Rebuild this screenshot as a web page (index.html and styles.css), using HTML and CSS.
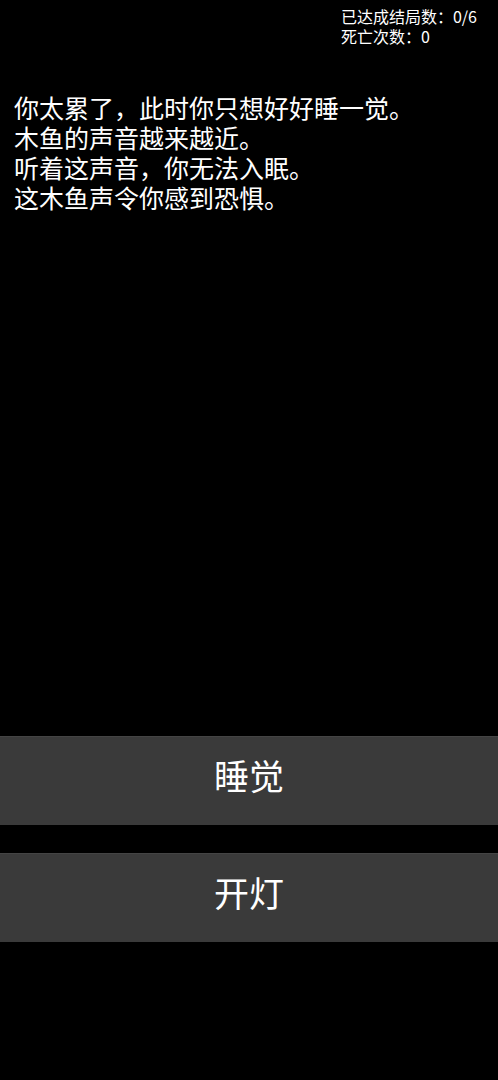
FILE: index.html
```html
<!DOCTYPE html>
<html lang="zh">
<head>
<meta charset="utf-8">
<link rel="stylesheet" href="styles.css">
</head>
<body>
<div class="page">
  <div class="stats">
    <div class="stats-inner">
      <span class="stat">已达成结局数：0/6</span>
      <span class="stat">死亡次数：0</span>
    </div>
  </div>
  <div class="story">
    <span class="line">你太累了，此时你只想好好睡一觉。</span>
    <span class="line">木鱼的声音越来越近。</span>
    <span class="line">听着这声音，你无法入眠。</span>
    <span class="line">这木鱼声令你感到恐惧。</span>
  </div>
  <div class="choices">
    <button class="choice"><span class="label">睡觉</span></button>
    <button class="choice"><span class="label">开灯</span></button>
  </div>
</div>
</body>
</html>
```
FILE: styles.css
```css
html, body {
  margin: 0;
  padding: 0;
  background: #000;
}
body {
  font-family: "Noto Sans CJK SC", "Noto Sans", sans-serif;
  color: #fff;
}
.page {
  display: flex;
  flex-direction: column;
  min-height: 100vh;
}
.stats {
  display: flex;
  justify-content: flex-end;
  padding: 6px 21px 0 0;
}
.stats-inner {
  display: flex;
  flex-direction: column;
  font-size: 16px;
  line-height: 20px;
}
.stat {
  display: block;
  height: 20px;
  overflow: visible;
}
.story {
  display: flex;
  flex-direction: column;
  align-items: flex-start;
  padding: 46px 0 0 14px;
  flex: 1;
}
.line {
  display: inline-block;
  font-size: 25px;
  line-height: 30px;
  height: 30px;
}
.choices {
  display: flex;
  flex-direction: column;
  gap: 28px;
  padding-bottom: 138px;
}
.choice {
  display: flex;
  align-items: center;
  justify-content: center;
  width: 100%;
  height: 89px;
  border: none;
  border-top: 1px solid #444;
  background: #3a3a3a;
  color: #fff;
  font-family: "Noto Sans CJK SC", sans-serif;
  padding: 0 0 13px 0;
}
.label {
  display: inline-block;
  font-size: 35px;
  line-height: 40px;
}
```
